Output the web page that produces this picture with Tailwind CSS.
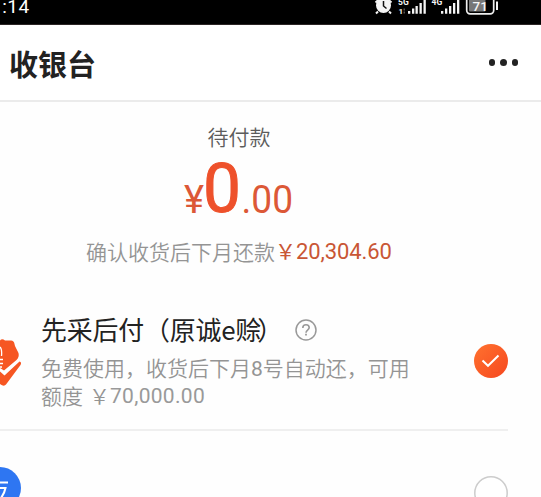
<!DOCTYPE html>
<html lang="zh-CN">
<head>
<meta charset="UTF-8">
<title>收银台</title>
<script src="https://cdn.jsdelivr.net/npm/@tailwindcss/browser@4"></script>
</head>
<body class="w-[541px] h-[497px] overflow-hidden bg-[#fefefe] font-['Noto_Sans_CJK_SC',sans-serif] text-[#222] whitespace-nowrap">
<div class="flex h-[497px] flex-col overflow-hidden">
  <div class="flex h-[25px] shrink-0 items-start justify-between overflow-hidden border-b border-[#2b2424] bg-black">
    <div class="-ml-[9px] -mt-[4px] font-['Roboto',sans-serif] text-[19px] leading-[22px] tracking-[0.5px] text-white">1:14</div>
    <svg class="mr-[40px] h-[24px] w-[131px] shrink-0" viewBox="370 0 131 24" fill="#f5f5f5">
      <path d="M375.500 2.500l4-3.500M391.500 2.500l-4-3.500M378 11.500l-2 2M389 11.500l2 2" stroke="#f5f5f5" stroke-width="2"/>
      <circle cx="383.500" cy="5.500" r="7.500"/>
      <path d="M383.500 1v5l3 2.500" stroke="#111" stroke-width="1.500" fill="none"/>
      <text x="398" y="4.500" font-family="Roboto" font-weight="700" font-size="8.500">5G</text>
      <text x="398.500" y="14" font-family="Roboto" font-weight="700" font-size="8">1</text>
      <path d="M403.500 8.500h1.500v2h-1.500zM403.500 11.500h1.500v2h-1.500z" fill="#555"/>
      <path d="M408 11h2.300v2.700h-2.300zM412 8.500h2.300v5.200h-2.300zM415.500 6h2.300v7.700h-2.300zM419.500 3h2.300v10.700h-2.300zM423.500 0h2.300v13.700h-2.300z"/>
      <text x="431.500" y="4.500" font-family="Roboto" font-weight="700" font-size="8.500">4G</text>
      <path d="M441 11h2.300v2.700h-2.300zM445 8.500h2.300v5.200h-2.300zM449 6h2.300v7.700h-2.300zM453 3h2.300v10.700h-2.300zM457 0h2.300v13.700h-2.300z"/>
      <rect x="466.700" y="-4" width="27" height="17.800" rx="3.500" fill="none" stroke="#eee" stroke-width="1.700"/>
      <rect x="469" y="-2" width="16.500" height="13.500" rx="1" fill="#777"/>
      <rect x="496" y="1.500" width="2" height="8.500"/>
      <text x="472.500" y="11" font-family="Roboto" font-weight="500" font-size="13.500">71</text>
    </svg>
  </div>

  <header class="flex h-[77px] shrink-0 items-center justify-between border-b-2 border-[#ebebeb] bg-white pl-[9px] pr-[23px]">
    <h1 class="text-[29px] font-bold leading-[40px]">收银台</h1>
    <div class="flex gap-[5px]">
      <span class="size-[6.500px] rounded-full bg-[#222]"></span>
      <span class="size-[6.500px] rounded-full bg-[#222]"></span>
      <span class="size-[6.500px] rounded-full bg-[#222]"></span>
    </div>
  </header>

  <section class="flex h-[188px] w-[478px] shrink-0 flex-col items-center pt-[19px]">
    <div class="text-[21px] font-[350] leading-[30px] text-[#5c5c5c]">待付款</div>
    <svg class="mt-[7px] h-[60px] w-[120px]" viewBox="180 158 120 60" font-family="Roboto, sans-serif" fill="#dc5837">
      <text x="185" y="213" font-size="38" textLength="20" lengthAdjust="spacingAndGlyphs">¥</text>
      <text x="204" y="212" font-size="69" textLength="38" lengthAdjust="spacingAndGlyphs" fill="#ee512b" stroke="#ee512b" stroke-width="1">0</text>
      <text x="242.500" y="213" font-size="38.500" textLength="51.500" lengthAdjust="spacingAndGlyphs">.00</text>
    </svg>
    <div class="mt-[18px] flex h-[30px] w-[306px] items-center text-[21px] leading-[30px]">
      <span class="font-[350] text-[#949494]">确认收货后下月还款</span>
      <span class="-mt-[2px] text-[#c95635]">￥</span>
      <span class="mt-[2px] font-['Roboto',sans-serif] text-[22px] tracking-[-0.100px] text-[#c95635]">20,304.60</span>
    </div>
  </section>

  <main class="shrink-0">
    <div class="flex h-[139px]">
      <svg class="mt-[46px] h-[54px] w-[24px] shrink-0" viewBox="0 336 24 54" fill="none">
        <path d="M0 340.500Q2 338 5 340.500L11 340.500Q14 340.500 14.500 344L15 346L18.500 353Q19.500 357 16.500 360L4 370.500L0 368Z" fill="#f65622"/>
        <path d="M0 371.500L4.500 375.500L19.500 361.500Q22 362 20.500 365L6 384.500Q4 387 0 384Z" fill="#f65622"/>
        <path d="M0 347Q2.200 349 1.500 356M0 359.500H3M0 363.500H3M0 367H2" stroke="#fff" stroke-width="1.300"/>
      </svg>
      <div class="ml-[17px] flex w-[392px] shrink-0 flex-col pt-[20px]">
        <div class="flex h-[38px] items-center text-[25.900px] leading-[38px]">
          <h2 class="tracking-[-0.150px]">先采后付（原诚e赊<span class="-ml-[4px]">）</span></h2>
          <svg class="ml-[11px] mt-[3px] size-[24px] shrink-0" viewBox="0 0 24 24" fill="none" stroke="#999" stroke-width="1.500">
            <circle cx="12" cy="11" r="10"/>
            <path d="M8.800 9Q8.800 5.800 12 5.800T15.200 8.800C15.200 10.700 12 11 12 13.700" stroke-width="1.600"/>
            <path d="M12 14.800v1.700" stroke-width="1.800"/>
          </svg>
        </div>
        <p class="mt-[6px] text-[21px] font-[350] leading-[27px] text-[#949494]">免费使用，收货后下月<span class="font-['Roboto',sans-serif] font-normal">8</span>号自动还，可用</p>
        <p class="-mt-px flex text-[21px] font-[350] leading-[27px] text-[#949494]">额度<span class="ml-[6px]">￥</span><span class="mt-px font-['Roboto',sans-serif] font-normal text-[#999] tracking-[0.300px]">70,000.00</span></p>
      </div>
      <svg class="ml-[40px] mt-[53px] size-[36px] shrink-0" viewBox="0 0 36 36">
        <defs><linearGradient id="selected" x1="0" y1="0" x2="1" y2="1"><stop stop-color="#ff722f"/><stop offset="1" stop-color="#f6471f"/></linearGradient></defs>
        <circle cx="18" cy="18" r="17" fill="url(#selected)"/>
        <path d="M9.500 17.500L15 22.800L25.500 12.500" fill="none" stroke="#fff" stroke-width="2"/>
      </svg>
    </div>
    <div class="mr-[33px] h-[2px] bg-[#efefef]"></div>
    <div class="flex h-[66px] items-end justify-between overflow-hidden pr-[32px]">
      <svg class="h-[32px] w-[24px]" viewBox="0 465 24 32">
        <circle cx="0" cy="488" r="21" fill="#2e76f2"/>
        <path d="M0 482.500H8M0 488H5.500Q4.500 493 1 498" fill="none" stroke="#fff" stroke-width="2"/>
      </svg>
      <svg class="h-[24px] w-[36px]" viewBox="0 0 36 24"><circle cx="18" cy="20" r="16.200" fill="#fff" stroke="#ccc" stroke-width="1.500"/></svg>
    </div>
  </main>
</div>
</body>
</html>
